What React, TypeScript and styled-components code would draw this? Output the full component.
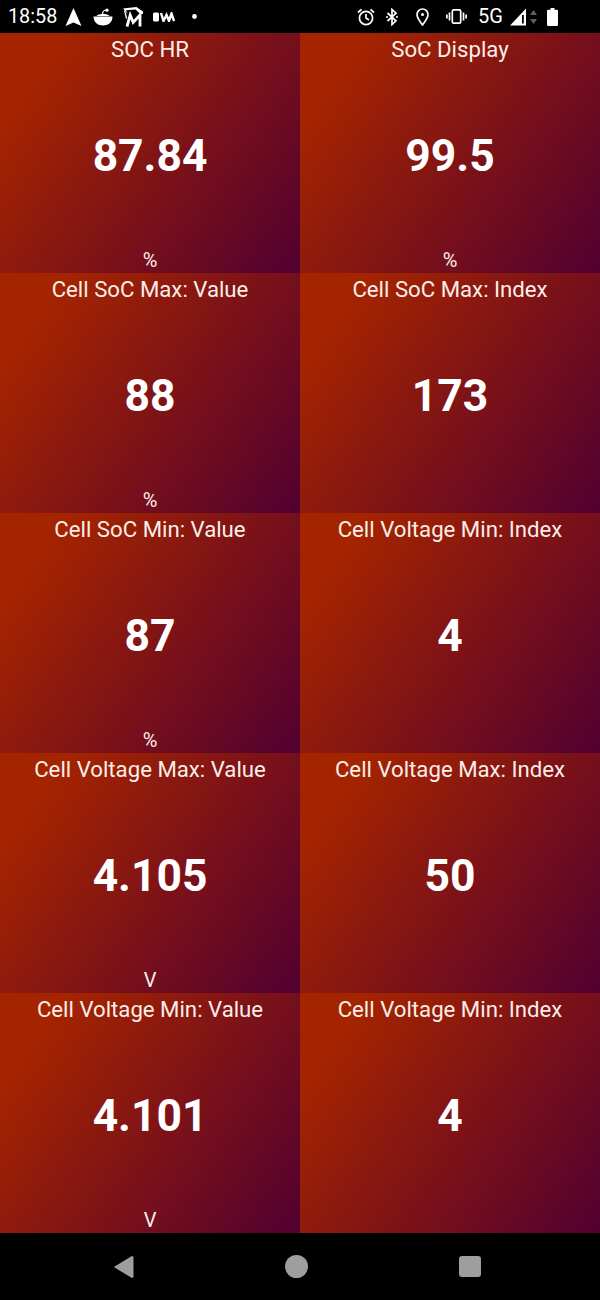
import React from "react";
import styled, { createGlobalStyle } from "styled-components";

const Global = createGlobalStyle`
  html, body { margin: 0; padding: 0; background: #000; }
  body { width: 600px; height: 1300px; overflow: hidden; font-family: Roboto, "Liberation Sans", sans-serif; }
`;

const Screen = styled.div`
  width: 600px;
  height: 1300px;
  display: flex;
  flex-direction: column;
  background: #000;
  color: #fff;
`;

const StatusBar = styled.div`
  height: 33px;
  flex: none;
  display: flex;
  align-items: center;
  justify-content: space-between;
  padding: 0 42px 0 8px;
`;

const StatusGroup = styled.div`
  display: flex;
  align-items: center;
`;

const Clock = styled.span`
  font-size: 19.8px;
  line-height: 33px;
  width: 49px;
  white-space: nowrap;
`;

const FiveG = styled.span`
  font-size: 20px;
  line-height: 33px;
  width: 25px;
  margin-left: 11px;
  white-space: nowrap;
`;

const Icon = styled.svg<{ $gap?: number }>`
  display: block;
  flex: none;
  margin-left: ${(p) => p.$gap ?? 0}px;
`;

const Grid = styled.div`
  display: grid;
  grid-template-columns: 300px 300px;
  grid-auto-rows: 240px;
  height: 1200px;
  flex: none;
`;

const Tile = styled.div`
  display: flex;
  flex-direction: column;
  align-items: center;
  height: 240px;
  overflow: hidden;
  background: linear-gradient(125deg, #a52400 14%, #520030 100%);
`;

const Title = styled.div`
  height: 34px;
  font-size: 22.2px;
  line-height: 33px;
  color: #fbeee8;
  white-space: nowrap;
`;

const Value = styled.div`
  flex: 1;
  display: flex;
  align-items: center;
  font-size: 44.4px;
  font-weight: 700;
`;

const Unit = styled.div`
  height: 28px;
  font-size: 20px;
  line-height: 30px;
  color: #fbeee8;
`;

const NavBar = styled.div`
  flex: 1;
  display: flex;
  align-items: center;
  justify-content: space-between;
  padding: 0 119px 0 113px;
`;

const NavCircle = styled.div`
  width: 23px;
  height: 23px;
  border-radius: 50%;
  background: #9e9e9e;
`;

const NavSquare = styled.div`
  width: 22px;
  height: 21px;
  border-radius: 3px;
  background: #9e9e9e;
`;

const tiles = [
  ["SOC HR", "87.84", "%"],
  ["SoC Display", "99.5", "%"],
  ["Cell SoC Max: Value", "88", "%"],
  ["Cell SoC Max: Index", "173", ""],
  ["Cell SoC Min: Value", "87", "%"],
  ["Cell Voltage Min: Index", "4", ""],
  ["Cell Voltage Max: Value", "4.105", "V"],
  ["Cell Voltage Max: Index", "50", ""],
  ["Cell Voltage Min: Value", "4.101", "V"],
  ["Cell Voltage Min: Index", "4", ""],
];

export default function App() {
  return (
    <Screen>
      <Global />
      <StatusBar>
        <StatusGroup>
          <Clock>18:58</Clock>
          <Icon $gap={8} width="17" height="18" viewBox="0 0 17 18">
            <path d="M8.5 0 L16.5 18 L8.5 14.5 L0.5 18 Z" fill="#fff" />
          </Icon>
          <Icon $gap={11} width="20" height="18" viewBox="0 0 20 18">
            <path d="M0.5 8.5 H19.5 C19.5 14.5 15 17.5 10 17.5 C5 17.5 0.5 14.5 0.5 8.5 Z" fill="#fff" />
            <path d="M3.5 8 C5.5 5.4 14.5 5.4 16.5 8 Z" fill="#fff" />
            <path d="M9.5 6 C9.8 3.5 10.5 2 13 2" stroke="#fff" strokeWidth="1.2" fill="none" />
            <circle cx="14" cy="2.2" r="1.6" fill="#fff" />
          </Icon>
          <Icon $gap={10} width="20" height="20" viewBox="0 0 20 20">
            <path d="M0 1.6 L13.5 0 L20 4.5 V7 H17.2 L12.5 2.6 L3 3.2 L5 7 Z" fill="#fff" />
            <path d="M1.6 3.5 L3.6 11.5" stroke="#fff" strokeWidth="1.4" fill="none" />
            <path d="M4 19.5 L7.2 8 L10.2 15.5 L17 8 L17 19.5" stroke="#fff" strokeWidth="2.8" fill="none" />
          </Icon>
          <Icon $gap={10} width="22" height="10" viewBox="0 0 22 10">
            <rect x="0" y="0.5" width="6" height="9" rx="1.5" fill="#fff" />
            <path d="M8 1 L10.5 9 L13.5 3 L16 9 L18.5 1.5 L21 9" stroke="#fff" strokeWidth="2.4" fill="none" />
          </Icon>
          <Icon $gap={17} width="5" height="5" viewBox="0 0 5 5">
            <circle cx="2.5" cy="2.5" r="2.4" fill="#fff" />
          </Icon>
        </StatusGroup>
        <StatusGroup>
          <Icon width="18" height="18" viewBox="0 0 18 18" fill="none" stroke="#fff" strokeWidth="1.7">
            <circle cx="9" cy="10" r="6.6" />
            <path d="M9 6 V10 L12 12 M1 4.5 L4.5 1.3 M17 4.5 L13.5 1.3" />
          </Icon>
          <Icon $gap={11} width="12" height="18" viewBox="0 0 12 18">
            <path d="M1.5 5 L10 12.8 L6 16.5 V1.5 L10 5.2 L1.5 13" fill="none" stroke="#fff" strokeWidth="1.7" />
            <circle cx="1" cy="9" r="1" fill="#fff" />
            <circle cx="11" cy="9" r="1" fill="#fff" />
          </Icon>
          <Icon $gap={18} width="13" height="18" viewBox="0 0 13 18" fill="none" stroke="#fff" strokeWidth="1.7">
            <path d="M6.5 17 C3.5 13 1 10 1 6.5 A5.5 5.5 0 0 1 12 6.5 C12 10 9.5 13 6.5 17 Z" />
            <circle cx="6.5" cy="6.5" r="1.5" fill="#fff" stroke="none" />
          </Icon>
          <Icon $gap={17} width="21" height="15" viewBox="0 0 21 15" fill="none" stroke="#fff" strokeWidth="1.7">
            <rect x="6.3" y="0.9" width="8.4" height="13.2" rx="1.4" />
            <path d="M3.5 3.5 V11.5 M17.5 3.5 V11.5 M0.9 5.5 V9.5 M20.1 5.5 V9.5" />
          </Icon>
          <FiveG>5G</FiveG>
          <Icon $gap={7} width="27" height="18" viewBox="0 0 27 18">
            <path d="M0 17.5 L16 0.5 V17.5 Z" fill="#fff" />
            <path d="M12 7 H13.8 V15.5 H12 Z" fill="#000" />
            <path d="M23.5 2 L27 7 H20 Z M23.5 16 L27 11 H20 Z" fill="#5f5f5f" />
          </Icon>
          <Icon $gap={10} width="11" height="18" viewBox="0 0 11 18">
            <path d="M3.5 0 H7.5 V1.8 H9.8 A1.2 1.2 0 0 1 11 3 V16.8 A1.2 1.2 0 0 1 9.8 18 H1.2 A1.2 1.2 0 0 1 0 16.8 V3 A1.2 1.2 0 0 1 1.2 1.8 H3.5 Z" fill="#fff" />
          </Icon>
        </StatusGroup>
      </StatusBar>
      <Grid>
        {tiles.map(([title, value, unit], i) => (
          <Tile key={i}>
            <Title>{title}</Title>
            <Value>{value}</Value>
            <Unit>{unit}</Unit>
          </Tile>
        ))}
      </Grid>
      <NavBar>
        <Icon width="21" height="24" viewBox="0 0 21 24">
          <path d="M0.8 12 L18.5 1.2 Q20.5 0.5 20.5 2.8 V21.2 Q20.5 23.5 18.5 22.8 Z" fill="#9e9e9e" />
        </Icon>
        <NavCircle />
        <NavSquare />
      </NavBar>
    </Screen>
  );
}
